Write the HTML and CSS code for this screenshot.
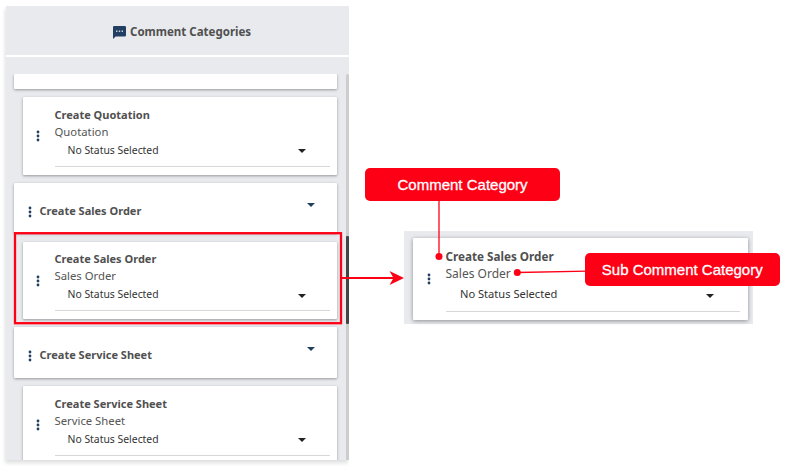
FILE: index.html
```
<!DOCTYPE html>
<html lang="en">
<head>
<meta charset="utf-8">
<title>Comment Categories</title>
<link rel="stylesheet" href="styles.css">
</head>
<body>
<svg class="defs" aria-hidden="true">
  <symbol id="dots" viewBox="0 0 4 12"><circle cx="2" cy="2" r="1.4"/><circle cx="2" cy="6" r="1.4"/><circle cx="2" cy="10" r="1.4"/></symbol>
  <symbol id="caret" viewBox="0 0 8 4"><path d="M0 0h8L4 4z"/></symbol>
</svg>
<main class="stage">
  <section class="panel">
    <header class="head">
      <svg class="bubble" viewBox="0 0 13 13"><path class="bubble-body" d="M1.3 0h10.4Q13 0 13 1.3v7.9q0 1.3-1.3 1.3H2.6L0 13V1.3Q0 0 1.3 0z"/><path class="bubble-dots" d="M3 4.6h1.4V6H3zM5.8 4.6h1.4V6H5.8zM8.6 4.6H10V6H8.6z"/></svg>
      <h1 class="title">Comment Categories</h1>
    </header>
    <div class="list">
      <div class="cards">
        <article class="cat cut"></article>
        <article class="sub">
          <svg class="dots"><use href="#dots"/></svg>
          <div class="body">
            <h2 class="name"><span class="t-cq">Create Quotation</span></h2>
            <p class="kind"><span class="t-q">Quotation</span></p>
            <div class="select"><span class="status">No Status Selected</span><svg class="caret"><use href="#caret"/></svg></div>
          </div>
        </article>
        <article class="cat">
          <svg class="dots"><use href="#dots"/></svg>
          <h2 class="name"><span class="t-cso">Create Sales Order</span></h2>
          <svg class="caret"><use href="#caret"/></svg>
        </article>
        <article class="sub">
          <svg class="dots"><use href="#dots"/></svg>
          <div class="body">
            <h2 class="name"><span class="t-cso">Create Sales Order</span></h2>
            <p class="kind"><span class="t-so">Sales Order</span></p>
            <div class="select"><span class="status">No Status Selected</span><svg class="caret"><use href="#caret"/></svg></div>
          </div>
        </article>
        <article class="cat">
          <svg class="dots"><use href="#dots"/></svg>
          <h2 class="name"><span class="t-css">Create Service Sheet</span></h2>
          <svg class="caret"><use href="#caret"/></svg>
        </article>
        <article class="sub">
          <svg class="dots"><use href="#dots"/></svg>
          <div class="body">
            <h2 class="name"><span class="t-css">Create Service Sheet</span></h2>
            <p class="kind"><span class="t-ss">Service Sheet</span></p>
            <div class="select"><span class="status">No Status Selected</span><svg class="caret"><use href="#caret"/></svg></div>
          </div>
        </article>
      </div>
      <div class="track"><div class="thumb"></div></div>
    </div>
  </section>

  <section class="detail">
    <article class="sub large">
      <svg class="dots"><use href="#dots"/></svg>
      <div class="body">
        <h2 class="name"><span class="t-cso">Create Sales Order</span></h2>
        <p class="kind"><span class="t-so">Sales Order</span></p>
        <div class="select"><span class="status">No Status Selected</span><svg class="caret"><use href="#caret"/></svg></div>
      </div>
    </article>
  </section>

  <svg class="marks" viewBox="0 0 810 475">
    <rect class="frame" x="15" y="233.2" width="326" height="90"/>
    <path class="arrow" d="M342 278h54"/>
    <path class="tip" d="M404 278l-14.5-7 4 7-4 7z"/>
    <path class="lead" d="M439 200v56"/>
    <circle class="tip" cx="439" cy="256.5" r="3.5"/>
    <path class="lead" d="M517 272.5l70-1.3"/>
    <circle class="tip" cx="517.3" cy="272.5" r="3.5"/>
  </svg>
  <div class="tag tag-category"><span class="l-cat">Comment Category</span></div>
  <div class="tag tag-sub"><span class="l-sub">Sub Comment Category</span></div>
</main>
</body>
</html>
```
FILE: styles.css
```
* { box-sizing: border-box; }
body { margin: 0; background: #fff; font-family: "Noto Sans", sans-serif; color: #505050; }
h1, h2, p { margin: 0; }
.defs { display: none; }
.stage { position: relative; width: 810px; height: 475px; overflow: hidden; display: flex; align-items: flex-start; }

.panel { width: 343.5px; height: 454px; margin: 6px 0 0 5.5px; background: #e9eaee; box-shadow: -1px 3px 4px rgba(0,0,0,.13); clip-path: inset(0 0 -10px -6px); display: flex; flex-direction: column; }
.head { height: 51px; border-bottom: 2px solid #fff; margin-bottom: 17px; display: flex; align-items: center; padding: 2px 0 0 107.5px; gap: 4px; flex: none; }
.bubble { width: 13px; height: 13px; margin-top: 2px; flex: none; }
.bubble-body { fill: #223f61; }
.bubble-dots { fill: #c9d2dc; }
.title { font-size: 11.5px; line-height: 16px; font-weight: 700; white-space: nowrap; }

.list { flex: 1; min-height: 0; display: flex; overflow: hidden; }
.cards { width: 340px; flex: none; padding-left: 8.5px; display: flex; flex-direction: column; align-items: flex-start; }
.track { width: 4px; background: #cdcdcd; padding-top: 162px; border-radius: 2px 2px 0 0; }
.thumb { height: 88px; background: #444; border-radius: 1px; }

.cat, .sub { background: #fff; border-radius: 1px; box-shadow: 0 1px 3px rgba(0,0,0,.36); flex: none; display: flex; }
.cat { width: 323px; height: 50.5px; margin-bottom: 8.5px; padding: 5px 22px 0 13.5px; align-items: center; }
.cat.cut { height: 14.5px; padding: 0; }
.cat .name { margin-left: 8px; flex: 1; }
.cat .caret { fill: #223f61; margin-top: -11px; }
.cat .dots { margin-top: 3px; }
.sub { width: 314px; height: 77.5px; margin: 0 0 8px 9px; padding: 8.5px 7px 0 13px; }
.sub .dots { margin-top: 24.5px; }
.body { margin-left: 14.5px; flex: 1; }
.dots { width: 4px; height: 12px; fill: #223f61; flex: none; }
.caret { width: 8px; height: 4px; fill: #222; flex: none; }
.name, .kind, .status, .title { white-space: nowrap; }
.name { font-size: 11px; line-height: 17px; font-weight: 700; }
.kind { font-size: 11.3px; line-height: 17px; color: #555; }
.select { height: 27px; border-bottom: 1px solid #d8d8d8; display: flex; align-items: flex-start; justify-content: space-between; padding: 2px 24px 0 13px; }
.status { font-size: 10.4px; line-height: 16px; color: #333; }
.select .caret { margin-top: 7.5px; }

.detail { width: 348.5px; height: 93px; margin: 231px 0 0 55px; background: #e9eaee; padding: 7px 0 0 9px; }
.large { width: 335px; height: 82px; margin: 0; padding: 9px 8px 0 14px; box-shadow: 0 1px 4px rgba(0,0,0,.4); }
.large .dots { margin-top: 26px; }
.large .name, .large .kind { line-height: 18px; }
.large .name { font-size: 11.7px; }
.large .kind { font-size: 12px; }
.large .status { font-size: 11.1px; }
.large .select { height: 29px; padding: 3px 26px 0 14.5px; }

.marks { position: absolute; left: 0; top: 0; width: 810px; height: 475px; }
.frame { fill: none; stroke: #fe0016; stroke-width: 2.3; }
.arrow { stroke: #fe0016; stroke-width: 2.2; }
.lead { stroke: #fe0016; stroke-width: 1.3; }
.tip { fill: #fe0016; }
.tag { position: absolute; width: 194.5px; height: 33.5px; border-radius: 5px; background: #fe0016; color: #fff; font-family: "Liberation Sans", Arial, sans-serif; font-size: 15px; display: flex; align-items: center; justify-content: center; white-space: nowrap; -webkit-text-stroke: .3px #fff; }
.tag-category { left: 365.3px; top: 167.5px; }
.tag-sub { left: 585px; top: 252.7px; }
```
